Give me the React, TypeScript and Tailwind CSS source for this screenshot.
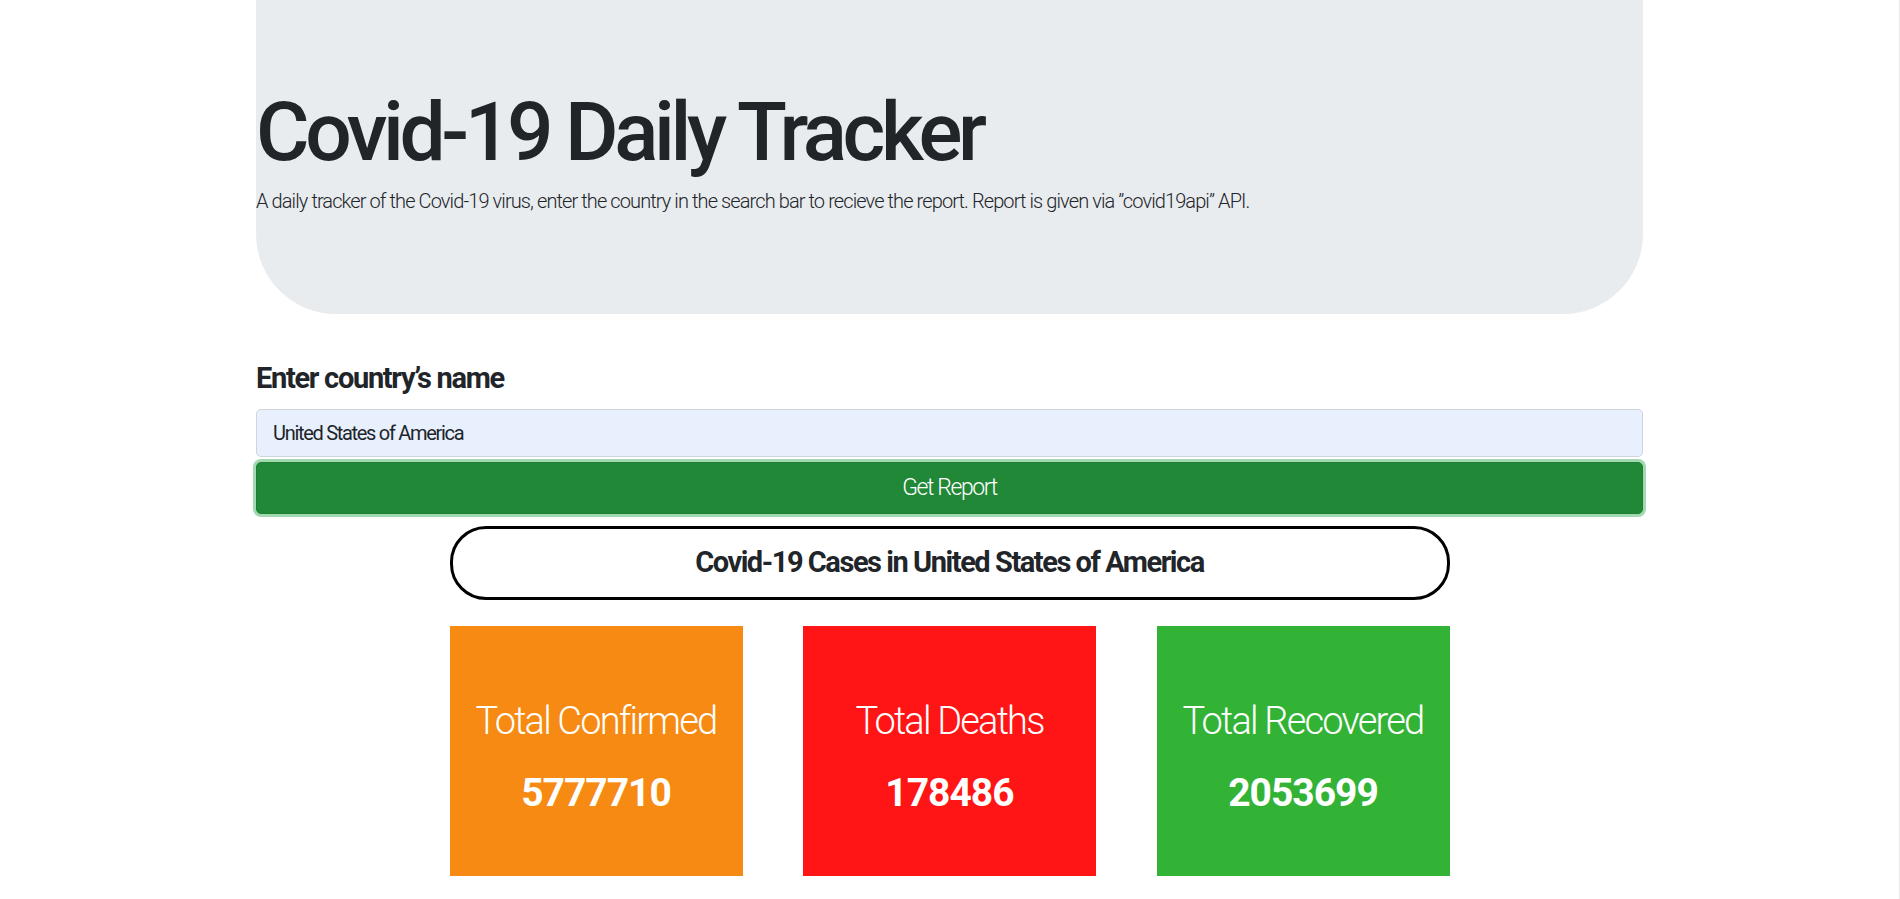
import React from 'react';

const stats = [
  { label: 'Total Confirmed', value: '5777710', color: 'bg-[#f68a12]' },
  { label: 'Total Deaths', value: '178486', color: 'bg-[#ff1515]' },
  { label: 'Total Recovered', value: '2053699', color: 'bg-[#33b336]' },
];

export default function App() {
  return (
    <div className="min-h-screen bg-white border-r border-[#e8e8e8] font-['Roboto','Liberation_Sans',sans-serif] text-[#212529]">
      <div className="mx-auto w-[1387px]">
        {/* header */}
        <div className="h-[314px] bg-[#e9ecef] rounded-b-[80px] pt-[91px]">
          <h1 className="text-[82px] leading-none font-medium tracking-[-4.4px]">Covid-19 Daily Tracker</h1>
          <p className="mt-[18px] text-[20px] leading-none font-light tracking-[-0.9px]">
            A daily tracker of the Covid-19 virus, enter the country in the search bar to recieve the report. Report is given via ”covid19api” API.
          </p>
        </div>

        {/* search form */}
        <h4 className="mt-[50px] text-[29px] leading-none font-bold tracking-[-1.3px]">Enter country’s name</h4>
        <input
          type="text"
          defaultValue="United States of America"
          className="mt-[16px] block w-full h-[48px] px-4 rounded-[5px] border border-[#ced4da] bg-[#e8f0fe] text-[20px] tracking-[-1.3px] text-[#212529] outline-none"
        />
        <button className="mt-[5px] block w-full h-[52px] rounded-[5px] border border-[#1e7e34] bg-[#218838] text-white text-[23px] font-light tracking-[-1.4px] shadow-[0_0_0_3px_rgba(72,180,97,0.5)]">
          Get Report
        </button>

        {/* results */}
        <div className="mx-auto w-[1000px]">
          <div className="mt-[12px] h-[74px] flex items-center justify-center rounded-[36px] border-[3px] border-black text-[29px] font-bold tracking-[-1.45px]">
            Covid-19 Cases in United States of America
          </div>
          <div className="mt-[26px] flex justify-between">
            {stats.map((s) => (
              <div key={s.label} className={`w-[293px] h-[250px] pt-[76px] flex flex-col items-center text-white ${s.color}`}>
                <div className="text-[38px] leading-none font-light tracking-[-1.8px]">{s.label}</div>
                <div className="mt-[34px] text-[39px] leading-none font-bold tracking-[-1px]">{s.value}</div>
              </div>
            ))}
          </div>
        </div>
      </div>
    </div>
  );
}
